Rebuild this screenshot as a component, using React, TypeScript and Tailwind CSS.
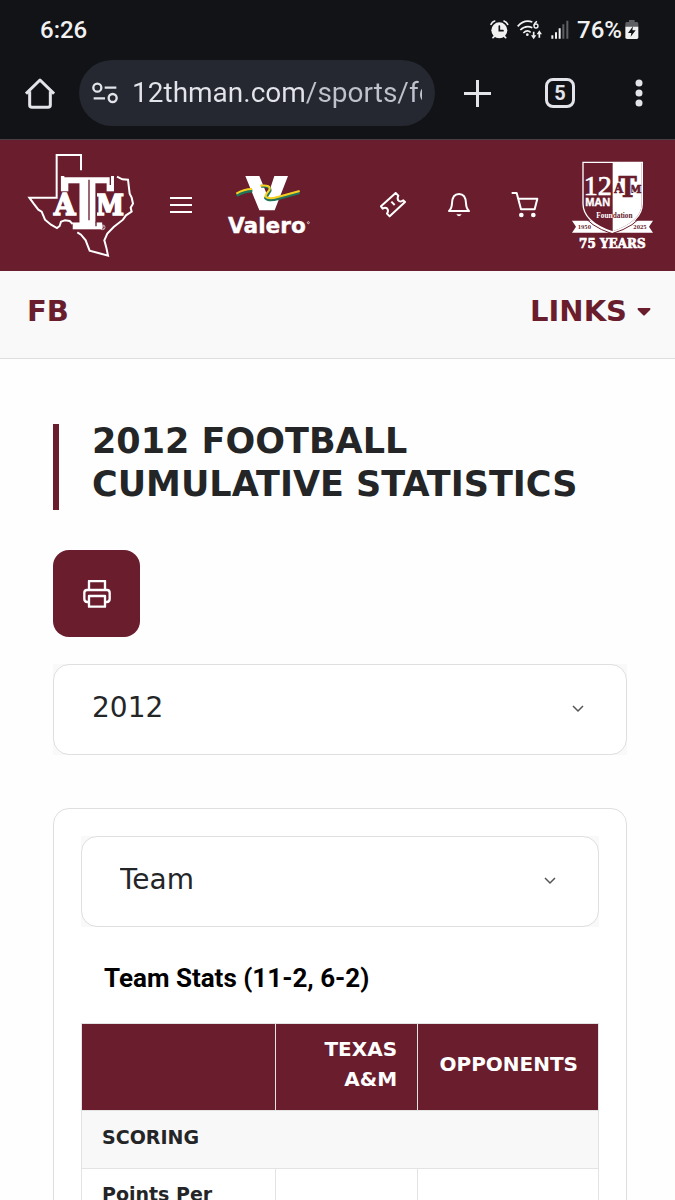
import { useState } from "react";

// Define props for the select boxes
interface SelectBoxProps {
  id: string;
  label: string;
  options: string[];
}

const HomeIcon = () => (
  <svg width="30" height="31" viewBox="75 232 90 93" fill="none" stroke="#e3e3ea" strokeWidth="9">
    <path d="M78 279 L120 238 L162 279" strokeLinejoin="round" />
    <path d="M89 272 V313 Q89 320 96 320 H144 Q151 320 151 313 V272" />
  </svg>
);

const SiteSettingsIcon = () => (
  <svg width="26" height="22" viewBox="277 246 78 66" fill="none" stroke="#e3e3ea" strokeWidth="7">
    <circle cx="293" cy="263" r="12" />
    <path d="M315 263 H350 M282 295 H316" />
    <circle cx="339" cy="294" r="12" />
  </svg>
);

const AlarmIcon = () => (
  <svg width="19" height="20" viewBox="467 59 57 60" fill="none" stroke="#f1f1f1" strokeWidth="5" strokeLinecap="round">
    <circle cx="495" cy="90" r="24" fill="#f1f1f1" stroke="none" />
    <path d="M470 72 Q474 64 481 62 M509 62 Q517 65 520 72 M476 112 L480 108 M514 112 L510 108" />
    <path d="M495 77 V91 H506" stroke="#121317" />
  </svg>
);

const WifiIcon = () => (
  <svg width="26" height="20" viewBox="550 59 78 60" fill="none" stroke="#f1f1f1" strokeWidth="5">
    <path d="M552 78 Q572 56 596 65 M560 89 Q576 73 596 82 M569 98 Q580 87 591 96" />
    <circle cx="581" cy="103" r="4" fill="#f1f1f1" stroke="none" />
    <path d="M610 63 Q601 68 601 76" strokeWidth="4" />
    <circle cx="607" cy="77" r="6" strokeWidth="4" />
    <path d="M600 94 V108 M617 112 V98" />
    <path d="M592 105 H608 L600 117 Z M609 102 H625 L617 90 Z" fill="#f1f1f1" stroke="none" />
  </svg>
);

const SignalIcon = () => (
  <svg width="18" height="20" viewBox="644 59 54 60" fill="#f1f1f1">
    <path d="M645 105 h6 v10 h-6z M656 96 h6 v19 h-6z M667 84 h6 v31 h-6z" />
    <path d="M678 72 h6 v43 h-6z M690 61 h6 v54 h-6z" fill="#5e5f63" />
  </svg>
);

const BatteryIcon = () => (
  <svg width="14" height="20" viewBox="872 59 42 60">
    <path d="M884 59 H901 V65 H908 Q912 65 912 70 V80 H873 V70 Q873 65 877 65 H884 Z" fill="#5e5f63" />
    <path d="M873 79 H912 V111 Q912 116 907 116 H878 Q873 116 873 111 Z" fill="#f1f1f1" />
    <path d="M896 78 L881 98 H891 L889 109 L904 90 H894 Z" fill="#121317" />
  </svg>
);

const TexasLogo = () => (
  <svg
    width="108"
    height="106"
    viewBox="36 38 324 318"
    fill="none"
    className="overflow-visible"
    role="img"
    aria-label="Texas A&M"
  >
    <g stroke="#fff" strokeWidth="6">
      <path d="M198 90 V44 H125 V172 H43 L56 190 L70 208 L80 214 L90 238 L108 253 L126 263 L134 257 L138 244 L150 240 L164 242 L173 251" />
      <path d="M187 276 L198 283 L212 300 L218 316 L224 331 L250 338 L279 346 L274 322 L268 300 L277 280 L296 260 L324 238 L333 225 L350 214 L347 202 L354 190 L350 172 L344 160 L339 118 L322 117 L306 109" />
    </g>
    <g
      fill="#fff"
      stroke="#fff"
      strokeWidth="5"
      textAnchor="middle"
      className="font-['DejaVu_Serif_Condensed','DejaVu_Serif',serif] font-bold"
    >
      <text x="149" y="223" fontSize="92">A</text>
      <text x="285" y="223" fontSize="84">M</text>
    </g>
    <path d="M131 92 H302 V148 H246 V230 H254 V270 H178 V230 H188 V148 H131 Z" fill="#691d2d" />
    <text
      x="217"
      y="262"
      fontSize="209"
      textAnchor="middle"
      fill="#fff"
      stroke="#fff"
      strokeWidth="8"
      className="font-['DejaVu_Serif',serif] font-bold"
    >
      T
    </text>
    <path d="M148 109 H286 V134 M222 118 V240 M243 244 V258" stroke="#691d2d" strokeWidth="4" />
    <circle cx="263" cy="261" r="7" stroke="#fff" strokeWidth="2" />
    <path d="M261 265 V257 H264 Q266 260 263 261 L266 265" stroke="#fff" strokeWidth="2" />
  </svg>
);

const ValeroLogo = () => (
  <svg
    width="84"
    height="61"
    viewBox="36 44 252 183"
    fill="none"
    className="overflow-visible"
    role="img"
    aria-label="Valero"
  >
    <path d="M91 47 H133 L158 108 L178 47 H219 L179 150 H133 Z" fill="#fff" />
    <path d="M65 105 Q88 92 112 91 M138 78 Q167 75 165 91 Q158 103 152 113 Q160 123 190 115 L254 97" stroke="#20755b" strokeWidth="9" />
    <path d="M64 100 Q86 86 111 86 M136 76 Q170 73 163 89 Q154 99 151 108 Q159 118 188 110 L254 92" stroke="#f6cf20" strokeWidth="6" />
    <text
      x="39"
      y="219"
      fontSize="65"
      fill="#fff"
      stroke="#fff"
      strokeWidth="1"
      className="font-['DejaVu_Sans',sans-serif] font-bold"
    >
      Valero
    </text>
    <circle cx="280" cy="187" r="3" stroke="#fff" strokeWidth="2" />
  </svg>
);

const FoundationLogo = () => (
  <svg
    width="82"
    height="90"
    viewBox="33 32 246 270"
    className="overflow-visible"
    role="img"
    aria-label="12th Man Foundation 75 Years"
  >
    <path d="M36 211 H90 L158 235 L226 211 H279 L267 229 L279 247 H36 L48 229 Z" fill="#fff" />
    <path d="M69 36 H247 V160 Q247 214 158 245 Q69 214 69 160 Z" fill="#691d2d" stroke="#fff" strokeWidth="4" />
    <path d="M158 36 H245 V160 Q245 212 158 243 Z" fill="#fff" />
    <path d="M64 186 Q88 228 156 250 Q228 228 252 186" fill="none" stroke="#691d2d" strokeWidth="3" />
    <g fill="#fff" textAnchor="middle">
      <text x="113" y="134" fontSize="84" stroke="#fff" strokeWidth="2" className="font-['Liberation_Serif',serif]">
        12
      </text>
      <text x="113" y="167" fontSize="33" stroke="#fff" strokeWidth="1" className="font-['Liberation_Sans',sans-serif] font-bold">
        MAN
      </text>
      <text
        x="157"
        y="293"
        fontSize="40"
        stroke="#fff"
        strokeWidth="2"
        className="font-['DejaVu_Serif_Condensed','DejaVu_Serif',serif] font-bold"
      >
        75 YEARS
      </text>
    </g>
    <g
      fill="#691d2d"
      textAnchor="middle"
      className="font-['DejaVu_Serif_Condensed','DejaVu_Serif',serif] font-bold"
    >
      <text x="176" y="129" fontSize="38" stroke="#691d2d" strokeWidth="2">A</text>
      <text x="227" y="129" fontSize="35" stroke="#691d2d" strokeWidth="2">M</text>
      <path d="M192 98 H214 V128 H222 V145 H184 V128 H192 Z" fill="#fff" />
      <text x="203" y="141" fontSize="82" stroke="#691d2d" strokeWidth="2">T</text>
      <text x="73" y="235" fontSize="16">1950</text>
      <text x="240" y="235" fontSize="16">2025</text>
    </g>
    <g fontSize="22" className="font-['Liberation_Serif',serif] font-bold">
      <text x="158" y="204" fill="#fff" textAnchor="end">Foun</text>
      <text x="158" y="204" fill="#691d2d">dation</text>
    </g>
  </svg>
);

const TicketIcon = () => (
  <svg width="28" height="28" viewBox="56 65 84 84" fill="none" stroke="#fff" strokeWidth="6" strokeLinejoin="round">
    <path d="M62 108 L106 68 L114 76 Q109 87 116 92 Q122 96 129 90 L134 95 L88 138 L80 130 Q86 121 80 114 Q74 110 67 115 Z" />
    <path d="M93 94 L103 104" />
  </svg>
);

const BellIcon = () => (
  <svg width="28" height="28" viewBox="254 65 84 84" fill="none" stroke="#fff" strokeWidth="6" strokeLinejoin="round">
    <path d="M266 122 Q274 115 275 99 Q276 71 296 71 Q316 71 317 99 Q318 115 326 122 Z" />
    <path d="M288 132 Q296 144 304 132 Z" fill="#fff" stroke="none" />
  </svg>
);

const CartIcon = () => (
  <svg width="28" height="28" viewBox="453 65 84 84" fill="none" stroke="#fff" strokeWidth="6" strokeLinejoin="round">
    <path d="M455 68 H470 L483 117 H524 L532 85 H475" />
    <circle cx="484" cy="134" r="7" fill="#fff" stroke="none" />
    <circle cx="520" cy="134" r="7" fill="#fff" stroke="none" />
  </svg>
);

const PrinterIcon = () => (
  <svg width="28" height="28" viewBox="128 121 84 84" fill="none" stroke="#fff" strokeWidth="7" strokeLinejoin="round">
    <path d="M146 150 V124 H194 V150" />
    <path d="M146 187 H141 Q132 187 132 178 V159 Q132 151 140 151 H200 Q208 151 208 159 V178 Q208 187 199 187 H194" />
    <path d="M146 169 H194 V201 H146 Z" />
  </svg>
);

const SelectBox: React.FC<SelectBoxProps> = ({ id, label, options }) => {
  const [value, setValue] = useState(options[0]);

  return (
    <div className="relative bg-[#f9f9f9]">
      <select
        id={id}
        aria-label={label}
        value={value}
        onChange={(e) => setValue(e.target.value)}
        className="block h-[91px] w-full appearance-none rounded-2xl border border-[#dfdfdf] bg-white pr-20 pb-1 pl-[38px] font-['DejaVu_Sans',sans-serif] text-[28px] text-[#242527]"
      >
        {options.map((option) => (
          <option key={option}>{option}</option>
        ))}
      </select>
      <svg
        className="pointer-events-none absolute top-10 right-[42px]"
        width="14"
        height="10"
        viewBox="0 0 14 10"
        fill="none"
        stroke="#555"
        strokeWidth="1.5"
      >
        <path d="M2 2 L7 7 L12 2" />
      </svg>
    </div>
  );
};

const BrowserBar = () => (
  <div className="border-b border-[#4a3f46] bg-[#121317] pb-[13px] font-[Roboto,sans-serif] text-[#f1f1f1]">
    <div className="flex h-[60px] items-center justify-between pr-9 pl-10 text-2xl font-medium">
      <span>6:26</span>
      <div className="flex items-center gap-2">
        <AlarmIcon />
        <WifiIcon />
        <SignalIcon />
        <div className="flex items-center gap-[3px]">
          <span>76%</span>
          <BatteryIcon />
        </div>
      </div>
    </div>
    <div className="flex items-center pr-8 pl-[25px]">
      <button aria-label="Home">
        <HomeIcon />
      </button>
      <div className="mr-[29px] ml-6 flex h-[66px] min-w-0 flex-1 items-center gap-[14px] rounded-full bg-[#252831] pr-[13px] pl-[13px]">
        <SiteSettingsIcon />
        <input
          aria-label="Address"
          defaultValue="12thman.com/sports/football"
          className="h-10 min-w-0 flex-1 bg-[linear-gradient(90deg,#e3e3ea_174px,#bfc2cc_174px)] bg-clip-text text-[28px] text-transparent outline-none"
        />
      </div>
      <button aria-label="New tab">
        <svg width="27" height="27" viewBox="0 0 27 27" stroke="#e3e3ea" strokeWidth="3">
          <path d="M0 13.5 H27 M13.5 0 V27" />
        </svg>
      </button>
      <button
        aria-label="Open tabs"
        className="ml-[54px] flex h-[30px] w-[30px] items-center justify-center rounded-lg border-3 border-[#e3e3ea] text-xl font-bold text-[#e3e3ea]"
      >
        5
      </button>
      <button aria-label="More" className="ml-[60px]">
        <svg width="8" height="28" viewBox="0 0 8 28" fill="#e3e3ea">
          <circle cx="4" cy="4" r="3.5" />
          <circle cx="4" cy="14" r="3.5" />
          <circle cx="4" cy="24" r="3.5" />
        </svg>
      </button>
    </div>
  </div>
);

const SiteHeader = () => (
  <header className="flex h-[131px] items-center justify-between bg-[#691d2d] pr-[22px] pl-[27px]">
    <div className="flex items-center gap-[35px]">
      <a href="#home">
        <TexasLogo />
      </a>
      <button aria-label="Menu">
        <svg width="22" height="17" viewBox="0 0 22 17" stroke="#fff" strokeWidth="2">
          <path d="M0 1 H22 M0 8 H22 M0 15 H22" />
        </svg>
      </button>
      <a href="#valero">
        <ValeroLogo />
      </a>
    </div>
    <div className="flex items-center gap-[38px]">
      <a href="#tickets" aria-label="Tickets">
        <TicketIcon />
      </a>
      <button aria-label="Notifications">
        <BellIcon />
      </button>
      <a href="#shop" aria-label="Shop">
        <CartIcon />
      </a>
      <a href="#foundation" className="-ml-1.5">
        <FoundationLogo />
      </a>
    </div>
  </header>
);

const StatsTable = () => (
  <table className="w-full table-fixed border-collapse font-['DejaVu_Sans',sans-serif] text-[19px] leading-[30px] font-bold text-[#242527]">
    <colgroup>
      <col className="w-[37.5%]" />
      <col className="w-[27.5%]" />
      <col className="w-[35%]" />
    </colgroup>
    <thead className="text-xl leading-[30px]">
      <tr className="h-[87px] bg-[#691d2d] text-right text-white">
        <td className="border border-[#e3e3e3]"></td>
        <th scope="col" className="border border-[#e3e3e3] pr-5 pb-1.5 pl-9">
          TEXAS A&amp;M
        </th>
        <th scope="col" className="border border-[#e3e3e3] pr-5 pb-1.5">
          OPPONENTS
        </th>
      </tr>
    </thead>
    <tbody className="text-left">
      <tr className="h-[58px] bg-[#f8f8f8]">
        <th scope="rowgroup" colSpan={3} className="border border-[#e3e3e3] px-5 pb-1.5">
          SCORING
        </th>
      </tr>
      <tr className="h-24 align-top">
        <th scope="row" className="border border-[#e3e3e3] px-5 pt-2.5">
          Points Per
        </th>
        <td className="border border-[#e3e3e3]"></td>
        <td className="border border-[#e3e3e3]"></td>
      </tr>
    </tbody>
  </table>
);

const App = () => {
  return (
    <div className="h-screen overflow-hidden bg-[#fefefe] font-['DejaVu_Sans',sans-serif]">
      <BrowserBar />
      <SiteHeader />
      <nav className="flex h-[88px] items-center justify-between border-b border-[#dedede] bg-[#f9f9f9] pr-6 pb-1.5 pl-[27px] text-[29px] font-bold text-[#691d2d]">
        <a href="#football">FB</a>
        <button className="flex items-center gap-[10px]">
          LINKS
          <svg width="14" height="8" viewBox="0 0 14 8" fill="#691d2d">
            <path d="M1 0 H13 Q14 1 13 2 L8 7 Q7 8 6 7 L1 2 Q0 1 1 0 Z" />
          </svg>
        </button>
      </nav>
      <main className="pt-[65px] pr-12 pl-[53px]">
        <div className="flex border-l-6 border-[#691d2d] pb-1 pl-[33px]">
          <h1 className="-mt-1 text-[35px] leading-[43px] font-bold text-[#242527]">
            2012 FOOTBALL CUMULATIVE STATISTICS
          </h1>
        </div>
        <button
          aria-label="Print"
          className="mt-10 mb-[27px] flex h-[87px] w-[87px] items-center justify-center rounded-2xl bg-[#691d2d]"
        >
          <PrinterIcon />
        </button>
        <SelectBox id="season" label="Season" options={["2012"]} />
        <section className="mt-[53px] rounded-2xl border border-[#dfdfdf] bg-white p-[27px]">
          <SelectBox id="category" label="Category" options={["Team"]} />
          <h2 className="pt-[35px] pb-[29px] pl-[23px] font-[Roboto,sans-serif] text-[26px] leading-8 font-bold text-black">
            Team Stats (11-2, 6-2)
          </h2>
          <StatsTable />
        </section>
      </main>
    </div>
  );
};

export default App;
